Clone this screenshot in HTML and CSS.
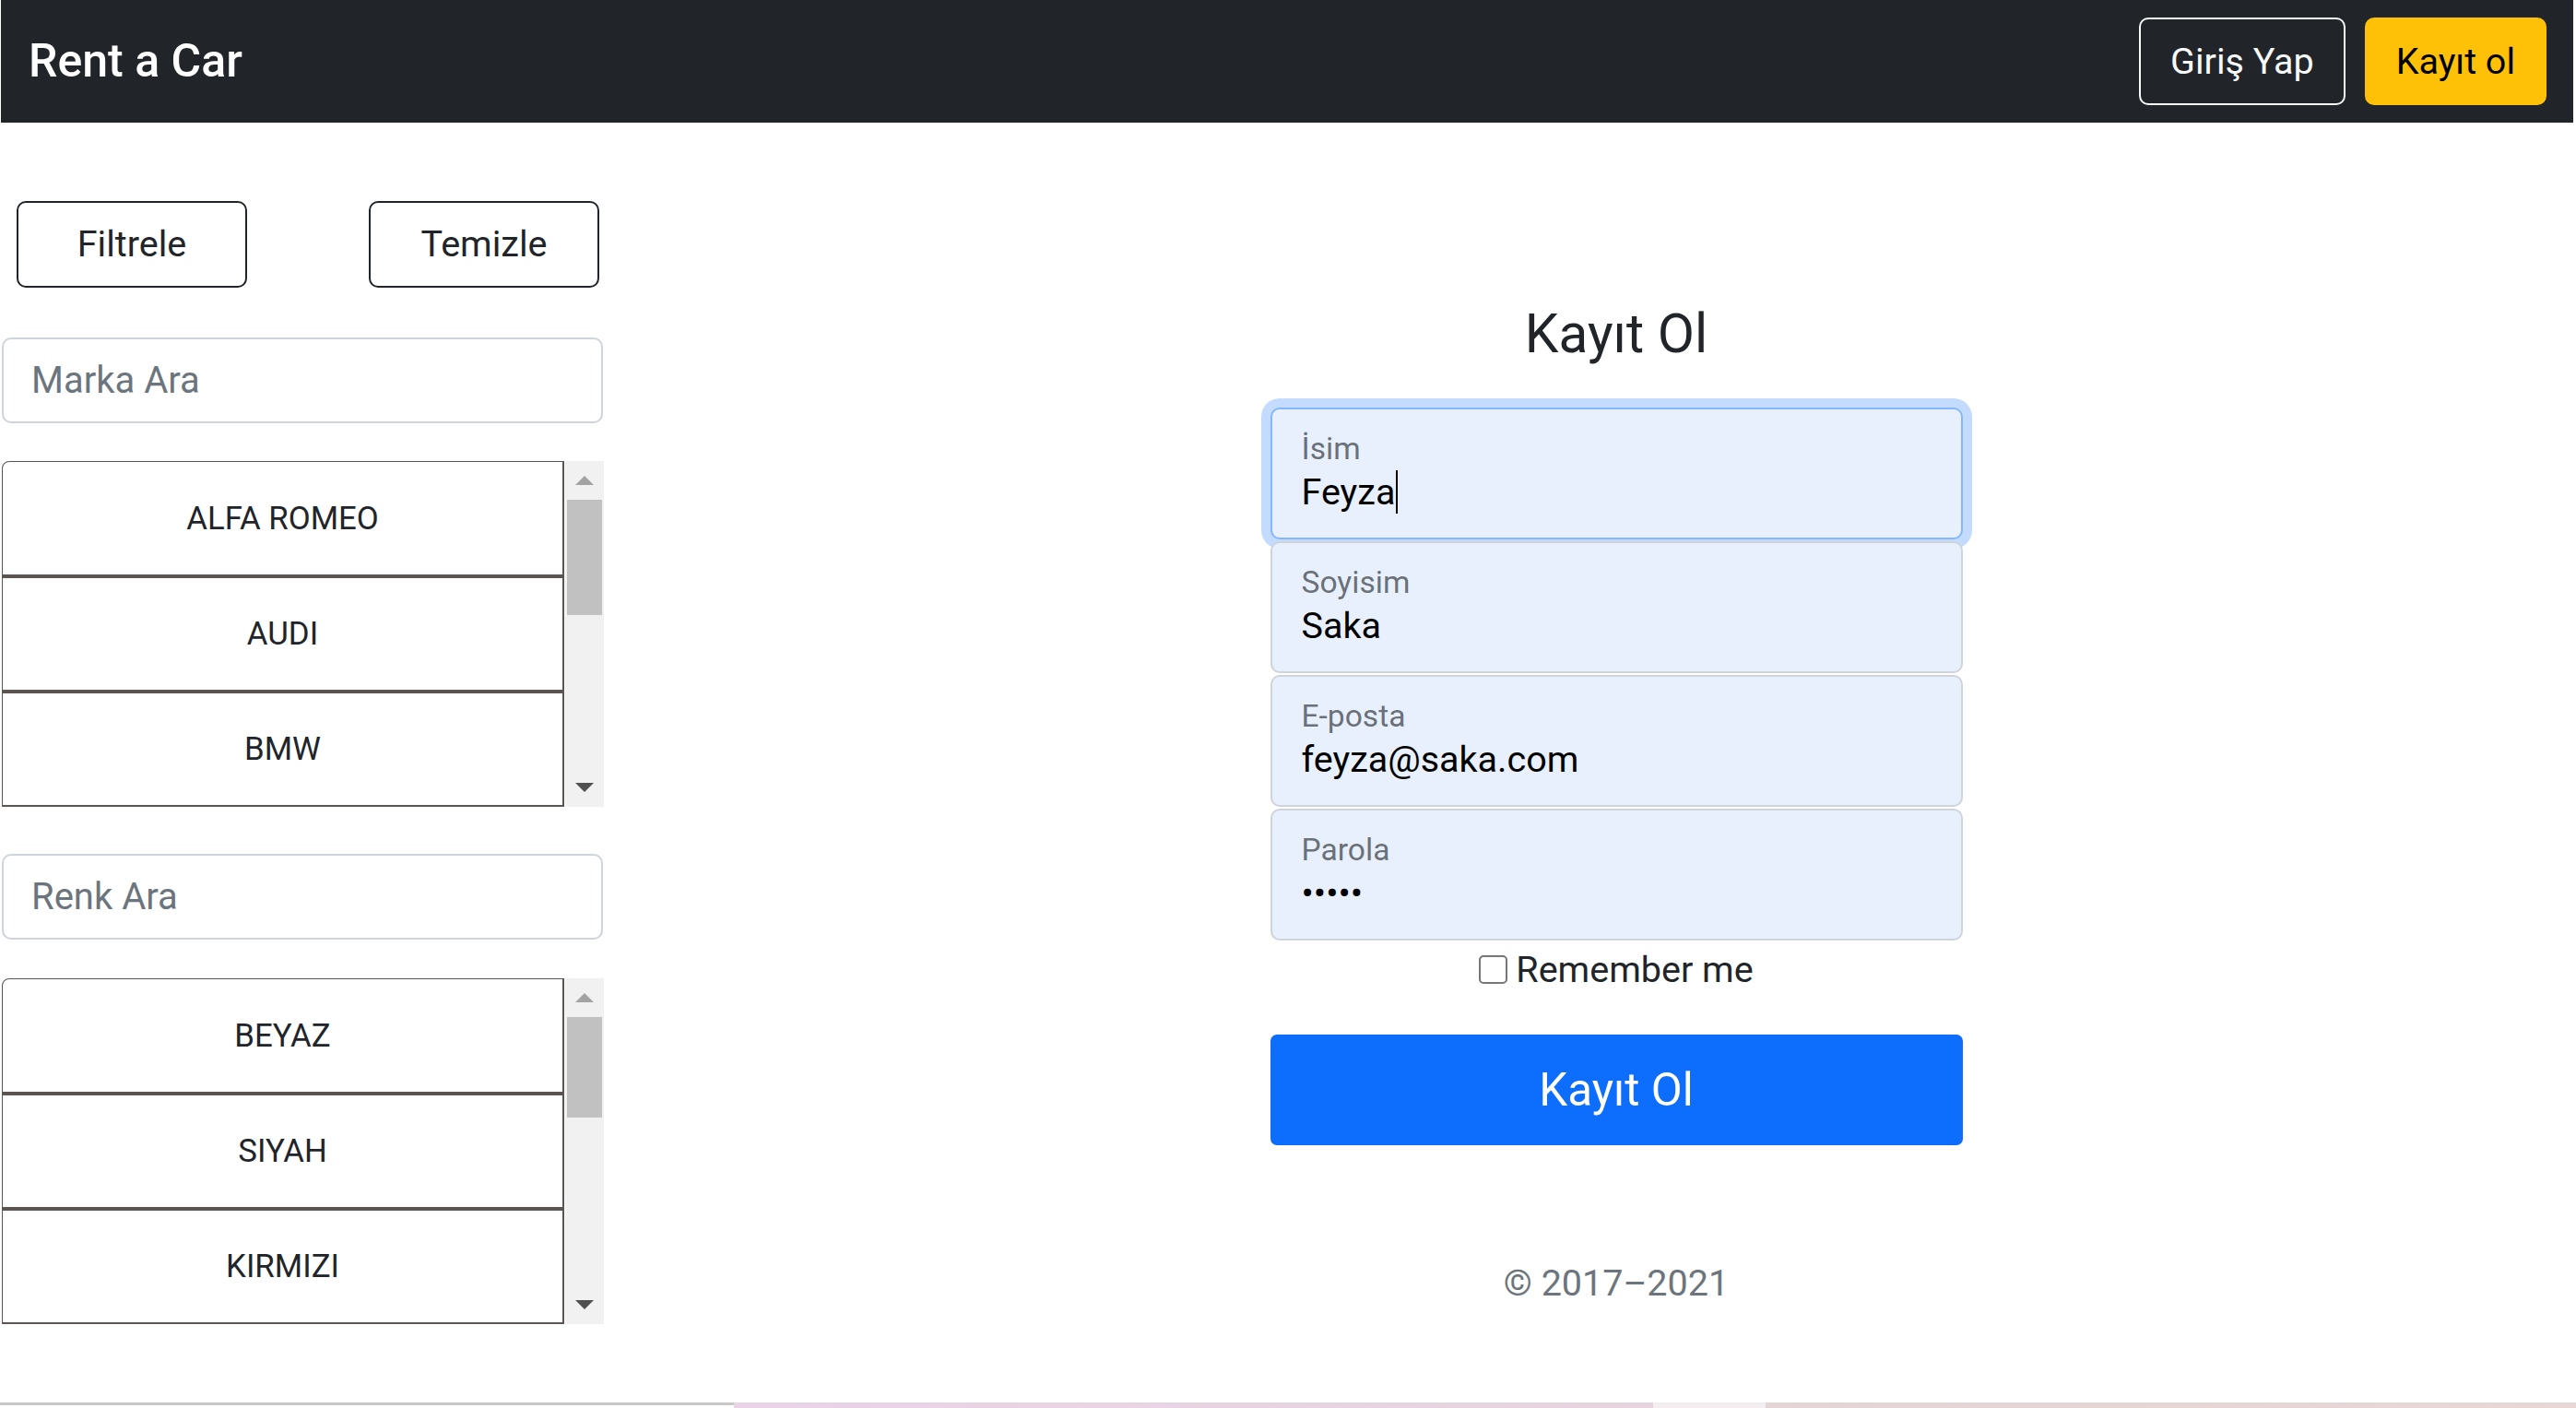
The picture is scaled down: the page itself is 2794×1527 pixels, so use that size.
FILE: index.html
```html
<!DOCTYPE html>
<html lang="tr">
<head>
<meta charset="utf-8">
<title>Rent a Car</title>
<link rel="stylesheet" href="styles.css">
</head>
<body>
  <nav class="navbar">
    <a class="brand" href="#">Rent a Car</a>
    <div class="nav-actions">
      <button class="btn btn-outline-light" type="button">Giriş Yap</button>
      <button class="btn btn-warning" type="button">Kayıt ol</button>
    </div>
  </nav>

  <div class="layout">
    <aside class="sidebar">
      <div class="sidebar-inner">
        <div class="filter-actions">
          <button class="btn btn-outline-dark" type="button">Filtrele</button>
          <button class="btn btn-outline-dark" type="button">Temizle</button>
        </div>

        <input class="search" type="text" placeholder="Marka Ara">

        <div class="select-list">
          <ul class="list-items">
            <li class="list-item">ALFA ROMEO</li>
            <li class="list-item">AUDI</li>
            <li class="list-item">BMW</li>
          </ul>
          <div class="scrollbar">
            <div class="sb-btn sb-up"></div>
            <div class="sb-track"><div class="sb-thumb"></div></div>
            <div class="sb-btn sb-down"></div>
          </div>
        </div>

        <input class="search search-second" type="text" placeholder="Renk Ara">

        <div class="select-list select-list-second">
          <ul class="list-items">
            <li class="list-item">BEYAZ</li>
            <li class="list-item">SIYAH</li>
            <li class="list-item">KIRMIZI</li>
          </ul>
          <div class="scrollbar">
            <div class="sb-btn sb-up"></div>
            <div class="sb-track"><div class="sb-thumb sb-thumb-short"></div></div>
            <div class="sb-btn sb-down"></div>
          </div>
        </div>
      </div>
    </aside>

    <main class="signup">
      <form class="form-signin">
        <h1 class="form-title">Kayıt Ol</h1>

        <div class="field field-focus">
          <span class="field-label">İsim</span>
          <span class="field-value">Feyza<span class="caret"></span></span>
        </div>
        <div class="field">
          <span class="field-label">Soyisim</span>
          <span class="field-value">Saka</span>
        </div>
        <div class="field">
          <span class="field-label">E-posta</span>
          <span class="field-value">feyza@saka.com</span>
        </div>
        <div class="field">
          <span class="field-label">Parola</span>
          <span class="field-value">•••••</span>
        </div>

        <label class="remember">
          <input class="check" type="checkbox">
          <span>Remember me</span>
        </label>

        <button class="btn btn-primary-lg" type="button">Kayıt Ol</button>

        <p class="copyright">© 2017–2021</p>
      </form>
    </main>
  </div>

  <div class="os-strip">
    <span class="strip-gray"></span>
    <span class="strip-pink"></span>
  </div>
</body>
</html>
```

FILE: styles.css
```css
* {
  box-sizing: border-box;
}

html,
body {
  margin: 0;
  padding: 0;
}

body {
  height: 1527px;
  display: flex;
  flex-direction: column;
  overflow: hidden;
  background: #fff;
  color: #212529;
  font-family: Roboto, "Liberation Sans", Arial, sans-serif;
  font-size: 39.5px;
  line-height: 1.5;
}

/* ---------- navbar ---------- */
.navbar {
  flex: none;
  height: 133px;
  margin: 0 3px 0 1px;
  padding: 0 29px 0 30px;
  background: #212529;
  display: flex;
  align-items: center;
  justify-content: space-between;
}

.brand {
  color: #fff;
  font-size: 50px;
  font-weight: 500;
  line-height: 1.5;
  text-decoration: none;
}

.nav-actions {
  display: flex;
  gap: 21px;
}

.btn {
  font-family: inherit;
  font-size: 39.5px;
  line-height: 1.5;
  height: 95px;
  padding: 0 30px;
  border: 2px solid transparent;
  border-radius: 10px;
  display: inline-flex;
  align-items: center;
  justify-content: center;
  cursor: pointer;
}

.btn-outline-light {
  padding: 0 32px;
  color: #f8f9fa;
  border-color: #f8f9fa;
  background: transparent;
}

.btn-warning {
  padding: 0 32px;
  color: #000;
  background: #ffc107;
  border-color: #ffc107;
}

/* ---------- layout ---------- */
.layout {
  flex: 1;
  display: flex;
  min-height: 0;
}

.sidebar {
  flex: none;
  width: 712px;
  padding: 85px 0 0 2px;
}

.sidebar-inner {
  width: 653px;
}

.filter-actions {
  display: flex;
  justify-content: space-between;
  padding: 0 5px 0 16px;
}

.btn-outline-dark {
  width: 250px;
  height: 94px;
  color: #212529;
  background: #fff;
  border-color: #212529;
}

.search {
  display: block;
  width: 652px;
  height: 93px;
  margin: 54px 0 0;
  padding: 0 30px;
  border: 2px solid #ced4da;
  border-radius: 10px;
  background: #fff;
  color: #212529;
  font-family: inherit;
  font-size: 40px;
  outline: none;
}

.search::placeholder {
  color: #6c757d;
  opacity: 1;
}

.search-second {
  margin-top: 51px;
}

.select-list {
  display: flex;
  height: 375px;
  margin-top: 41px;
}

.select-list-second {
  margin-top: 42px;
}

.list-items {
  flex: 1;
  margin: 0;
  padding: 0;
  list-style: none;
  overflow: hidden;
  border: solid #5c5452;
  border-width: 1px 2px 2px 1px;
  border-top-left-radius: 8px;
}

.list-item {
  height: 122px;
  display: flex;
  align-items: center;
  justify-content: center;
  font-size: 34.8px;
  color: #212529;
}

.list-item + .list-item {
  height: 125px;
  border-top: 4px solid #5c5452;
}

.scrollbar {
  flex: none;
  width: 42px;
  margin-left: 1px;
  background: #f1f1f1;
  display: flex;
  flex-direction: column;
}

.sb-btn {
  flex: none;
  height: 42px;
  display: flex;
  align-items: center;
  justify-content: center;
}

.sb-up::before,
.sb-down::before {
  content: "";
  width: 0;
  height: 0;
  border-left: 10px solid transparent;
  border-right: 10px solid transparent;
}

.sb-up::before {
  border-bottom: 10px solid #a3a3a3;
}

.sb-down::before {
  border-top: 10px solid #505050;
}

.sb-track {
  flex: 1;
  padding: 0 2px;
}

.sb-thumb {
  height: 125px;
  background: #c1c1c1;
}

.sb-thumb-short {
  height: 109px;
}

/* ---------- sign up form ---------- */
.signup {
  flex: 1;
  display: flex;
  justify-content: center;
  padding-top: 194px;
}

.form-signin {
  width: 751px;
}

.form-title {
  margin: 0 0 45px;
  font-size: 58.5px;
  font-weight: 400;
  line-height: 1.2;
  text-align: center;
  color: #212529;
}

.field {
  height: 143px;
  margin-bottom: 2px;
  padding: 25.7px 32px 0;
  border: 2px solid #ced4da;
  border-radius: 10px;
  background: #e8f0fe;
}

.field-focus {
  border-color: #86b7fe;
  box-shadow: 0 0 0 10px rgba(13, 110, 253, 0.25);
}

.field-label {
  display: block;
  font-size: 33.6px;
  line-height: 1;
  color: rgba(33, 37, 41, 0.65);
}

.field-value {
  display: block;
  margin-top: 6.5px;
  font-size: 39.5px;
  line-height: 1.2;
  color: #000;
  white-space: nowrap;
}

.caret {
  display: inline-block;
  width: 2px;
  height: 47px;
  margin-left: 1px;
  vertical-align: top;
  background: #000;
}

.remember {
  display: flex;
  align-items: center;
  justify-content: center;
  height: 59px;
  font-size: 39.5px;
  color: #212529;
}

.check {
  appearance: none;
  -webkit-appearance: none;
  flex: none;
  width: 31px;
  height: 31px;
  margin: 0 9px 0 0;
  border: 2px solid #767676;
  border-radius: 5px;
  background: #fff;
}

.btn-primary-lg {
  width: 100%;
  height: 120px;
  margin-top: 41px;
  font-size: 49.4px;
  color: #fff;
  background: #0d6efd;
  border-color: #0d6efd;
  border-radius: 7px;
}

.copyright {
  margin: 120px 0 0;
  font-size: 39.5px;
  line-height: 1.5;
  color: #6c757d;
  text-align: center;
}

/* ---------- bottom strip ---------- */
.os-strip {
  flex: none;
  height: 6px;
  display: flex;
}

.strip-gray {
  width: 796px;
  height: 3px;
  background: #c8c8c8;
}

.strip-pink {
  flex: 1;
  background: linear-gradient(90deg,
    #e8d3e7 0%,
    #e6d4df 49.9%,
    #f3edef 49.9%,
    #f3edef 56%,
    #e3d5d6 56%,
    #e7d7d5 100%);
}
```
